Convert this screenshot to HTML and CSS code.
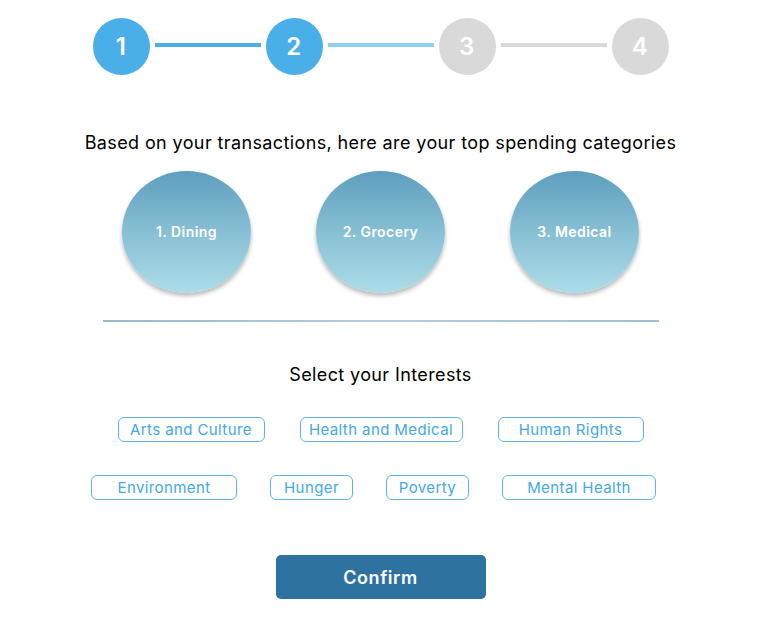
FILE: index.html
```html
<!DOCTYPE html>
<html lang="en">
<head>
<meta charset="utf-8">
<title>Spending categories</title>
<link rel="stylesheet" href="styles.css">
</head>
<body>
<main class="page">
  <div class="stepper">
    <div class="step step-done">1</div>
    <div class="bar bar-done"></div>
    <div class="step step-done">2</div>
    <div class="bar bar-active"></div>
    <div class="step step-todo">3</div>
    <div class="bar bar-todo"></div>
    <div class="step step-todo">4</div>
  </div>

  <p class="heading heading-top">Based on your transactions, here are your top spending categories</p>

  <div class="bubbles">
    <div class="bubble">1. Dining</div>
    <div class="bubble">2. Grocery</div>
    <div class="bubble">3. Medical</div>
  </div>

  <div class="divider"></div>

  <p class="heading heading-interests">Select your Interests</p>

  <div class="tags tags-first">
    <button class="tag tag-arts">Arts and Culture</button>
    <button class="tag tag-health">Health and Medical</button>
    <button class="tag tag-rights">Human Rights</button>
  </div>
  <div class="tags tags-second">
    <button class="tag tag-env">Environment</button>
    <button class="tag tag-hunger">Hunger</button>
    <button class="tag tag-poverty">Poverty</button>
    <button class="tag tag-mental">Mental Health</button>
  </div>

  <div class="actions">
    <button class="confirm">Confirm</button>
  </div>
</main>
</body>
</html>
```

FILE: styles.css
```css
* { box-sizing: border-box; }

html, body {
  margin: 0;
  padding: 0;
  background: #ffffff;
}

body {
  font-family: Inter, "Noto Sans", "Liberation Sans", sans-serif;
  color: #000000;
}

.page {
  width: 761px;
  padding-top: 18px;
  display: flex;
  flex-direction: column;
  align-items: center;
}

/* Stepper */
.stepper {
  display: flex;
  align-items: center;
}

.step {
  width: 57px;
  height: 57px;
  border-radius: 50%;
  display: flex;
  align-items: center;
  justify-content: center;
  color: #ffffff;
  font-size: 24px;
  font-weight: 600;
  letter-spacing: 0.5px;
}

.step-done { background: #4aaee8; }
.step-todo { background: #d9d9d9; }

.bar {
  width: 106px;
  height: 4px;
  margin: 0 5px;
  position: relative;
  top: -2px;
}

.bar-done { background: #4aaee8; }
.bar-active { background: #8dd0f0; }
.bar-todo { background: #d9d9d9; }

/* Headings */
.heading {
  margin: 0;
  font-size: 18px;
  line-height: 22px;
  font-weight: 400;
  letter-spacing: 0.38px;
  text-align: center;
}

.heading-top { margin-top: 57px; }
.heading-interests { margin-top: 42px; }

/* Bubbles */
.bubbles {
  display: flex;
  gap: 65px;
  margin-top: 17px;
}

.bubble {
  width: 129px;
  height: 122px;
  border-radius: 50%;
  background: linear-gradient(180deg, #5e9ebe 0%, #87bfd4 50%, #acdde8 100%);
  box-shadow: 0 3px 4px rgba(0, 0, 0, 0.28);
  color: #ffffff;
  font-size: 14px;
  font-weight: 600;
  letter-spacing: 0.45px;
  display: flex;
  align-items: center;
  justify-content: center;
  padding-bottom: 2px;
}

.divider {
  width: 556px;
  height: 2px;
  margin-top: 27px;
  background: linear-gradient(90deg, #97b9c8 0%, #b3cfd9 50%, #9fc0cd 100%);
}

/* Tags */
.tags {
  display: flex;
  justify-content: center;
}

.tags-first {
  gap: 35px;
  margin-top: 31px;
}

.tags-second {
  gap: 33px;
  margin-top: 33px;
  padding-right: 14px;
}

.tag {
  height: 25px;
  padding: 0;
  background: #ffffff;
  border: 1px solid #5cb5e9;
  border-radius: 6px;
  color: #42a9e5;
  font-family: Inter, "Noto Sans", "Liberation Sans", sans-serif;
  font-size: 15px;
  font-weight: 400;
  letter-spacing: 0.4px;
  line-height: 23px;
  text-align: center;
}

.tag-arts { width: 147px; }
.tag-health { width: 163px; }
.tag-rights { width: 146px; }
.tag-env { width: 146px; }
.tag-hunger { width: 83px; }
.tag-poverty { width: 83px; }
.tag-mental { width: 154px; }

/* Confirm */
.actions {
  margin-top: 55px;
  display: flex;
  justify-content: center;
}

.confirm {
  width: 210px;
  height: 44px;
  border: none;
  border-radius: 5px;
  background: #2e73a0;
  color: #ffffff;
  font-family: Inter, "Noto Sans", "Liberation Sans", sans-serif;
  font-size: 18px;
  font-weight: 600;
  letter-spacing: 0.55px;
}
```
